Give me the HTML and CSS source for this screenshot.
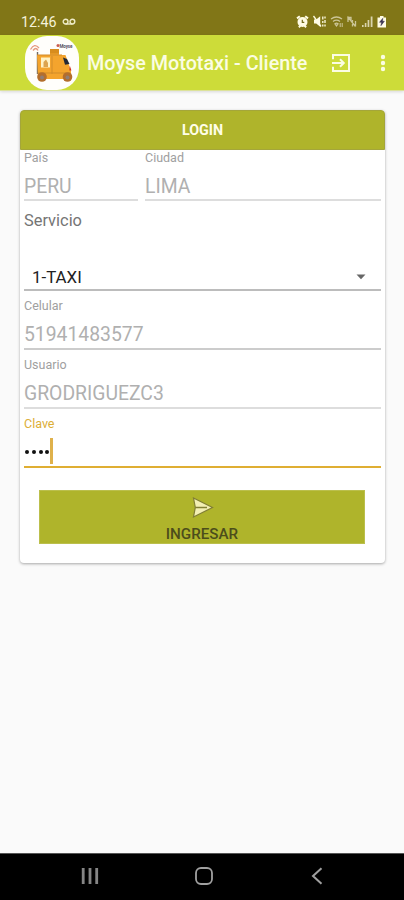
FILE: index.html
```html
<!DOCTYPE html>
<html lang="es">
<head>
<meta charset="utf-8">
<meta name="viewport" content="width=device-width, initial-scale=1">
<title>Moyse Mototaxi - Cliente</title>
<link rel="stylesheet" href="styles.css">
</head>
<body>
<div class="status">
  <span class="clock">12:46</span>
  <svg class="voicemail" width="14" height="8" viewBox="0 0 14 8" fill="none" stroke="#eeebc8" stroke-width="1.4"><circle cx="3.6" cy="3.6" r="2.4"/><circle cx="10.4" cy="3.6" r="2.4"/><path d="M3.6 6h6.8"/></svg>
  <svg class="indicators" width="92" height="16" viewBox="0 0 92 16">
    <g fill="none" stroke="#fffce4">
      <circle cx="6.5" cy="8" r="4.2" fill="#fffce4" stroke-width="1.6"/>
      <path d="M1 4.4 3.8 2.2M12 4.4 9.2 2.2M2.8 13.2l1.700-1.400M10.200 13.200l-1.700-1.400" stroke-width="2"/>
      <path d="M6.300 5.800v2.600h2" stroke="#746b1c" stroke-width="1.200"/>
      <path d="M18 5.500h2.200l4-3.200v10.400l-4-3.200H18z" fill="#fffce4" stroke="none"/>
      <path d="M17.500 2 25 12.500" stroke-width="1.300"/>
      <path d="M26.800 2.500v3m0 1.500v2m0 1.500v2M29 2.500v2m0 1.500v3m0 1.500v2" stroke-width="1.300"/>
    </g>
    <g fill="none" stroke="#cbc597" stroke-width="1.300">
      <path d="M35 5q5.500-4 11 0M37 7.500q3.500-2.600 7 0M39 9.800q1.500-1.200 3 0l-1.500 2z"/>
      <path d="M44.200 9v4m2-4v4" stroke-width="1"/>
      <path d="M52 8V3.500h3V8M51.500 2.500l8 10M56.500 6v6.500M59.500 7v5.500"/>
    </g>
    <g fill="#d9d4ac"><path d="M66 11h1.600v2H66zM68.800 9h1.600v4h-1.600zM71.600 6h1.700v7h-1.700zM74.700 2.500h1.800V13h-1.800z"/></g>
    <path d="M81.500 3.500H84V2h3.500v1.500H90V13.500h-8.500z" fill="#fffce4"/>
    <path d="m86.800 4.300-3.300 4h2l-.6 3.400 3.500-4.500h-2z" fill="#393150" stroke="#393150" stroke-width=".5"/>
  </svg>
</div>
<header class="appbar">
  <svg class="logo" width="54" height="54" viewBox="0 0 54 54">
    <rect width="54" height="54" rx="22" fill="#fffefb"/>
    <path d="M12.500 16v22" stroke="#716a67" stroke-width="1.400"/>
    <path d="M5.500 13.500q4-7 8.500-1.500M8 14.500q3-4 5 0" fill="none" stroke="#e59a80" stroke-width="1.300"/>
    <path d="M12 19h13v-6h9v6h6.500l5.500 16v8H13z" fill="#f4a42d"/>
    <path d="M25 13h9v4.500h-9z" fill="#d88d1e"/>
    <path d="M12 19h25M27 20v18M13 37h32" fill="none" stroke="#d18c2b"/>
    <path d="M16 21.500h9v10h-9z" fill="#fff2c5"/>
    <path d="M18.500 31v-5l2.500-2.500 2 3.500v4z" fill="#dca34d"/>
    <path d="m38 21.500 4 1.500 2.500 5-4.500.8z" fill="#232936"/>
    <path d="m44.800 29.500 1.600 5h-2z" fill="#c92f25"/>
    <circle cx="17" cy="41" r="4.800" fill="#b36e2d"/><circle cx="17" cy="41.500" r="2" fill="#8f7e75"/>
    <circle cx="42.500" cy="41" r="4.800" fill="#b36e2d"/><circle cx="42.500" cy="41.500" r="2" fill="#8f7e75"/>
    <circle cx="33" cy="9.500" r="1.500" fill="#c95c53"/>
    <text x="34.500" y="11.500" class="logo-text" textLength="13">Moyse</text>
  </svg>
  <h1 class="title">Moyse Mototaxi - Cliente</h1>
  <svg class="exit" width="20" height="20" viewBox="0 0 20 20" fill="none" stroke="#fbfde3" stroke-width="2"><path d="M2 6.200V2h16v16H2v-4.200M1 10h11.500M9 6.200l3.800 3.800L9 13.800"/></svg>
  <svg class="more" width="6" height="18" viewBox="0 0 6 18" fill="#fbfde3"><circle cx="3" cy="3" r="2.200"/><circle cx="3" cy="9" r="2.200"/><circle cx="3" cy="15" r="2.200"/></svg>
</header>
<main class="content">
  <section class="card">
    <h2 class="card-title">LOGIN</h2>
    <div class="fields">
      <div class="row">
        <div class="field compact country"><div class="label">País</div><div class="value">PERU</div></div>
        <div class="field compact city"><div class="label">Ciudad</div><div class="value">LIMA</div></div>
      </div>
      <div class="service">
        <div class="service-label">Servicio</div>
        <div class="select"><span class="option">1-TAXI</span><svg width="10" height="6" viewBox="0 0 10 6"><path d="M.5.5h9L5 5.200z" fill="#666"/></svg></div>
      </div>
      <div class="field strong"><div class="label">Celular</div><div class="value">51941483577</div></div>
      <div class="field"><div class="label">Usuario</div><div class="value">GRODRIGUEZC3</div></div>
      <div class="field active"><div class="label">Clave</div><div class="value password"><i class="dot"></i><i class="dot"></i><i class="dot"></i><i class="dot"></i><i class="caret"></i></div></div>
    </div>
    <div class="submit">
      <svg width="24" height="22" viewBox="0 0 24 22"><path d="M3.500 1 22.500 10.500l-19 9.500 1.800-9.500z" fill="#f3efb4" stroke="#817f35" stroke-width="1.200"/><path d="M5.300 10.500H17" stroke="#817f35" stroke-width="1.500"/></svg>
      <span class="submit-text">INGRESAR</span>
    </div>
  </section>
</main>
<nav class="navbar">
  <svg width="18" height="18" viewBox="0 0 18 18" stroke="#858585" stroke-width="2.800"><path d="M2.200 1v16M9 1v16M15.700 1v16"/></svg>
  <svg width="18" height="18" viewBox="0 0 18 18" fill="none" stroke="#a0a0a0" stroke-width="1.800"><rect x="1" y="1" width="16" height="16" rx="5"/></svg>
  <svg width="18" height="18" viewBox="0 0 18 18" fill="none" stroke="#a0a0a0" stroke-width="2"><path d="M13.500 1.200 5 9l8.500 7.800"/></svg>
</nav>
</body>
</html>
```
FILE: styles.css
```css
* { box-sizing: border-box; }
body {
  margin: 0;
  height: 900px;
  display: flex;
  flex-direction: column;
  overflow: hidden;
  background: #fafafa;
  font-family: Roboto, sans-serif;
}
svg { display: block; flex: none; }
h1, h2 { margin: 0; white-space: nowrap; }
.status {
  height: 35px;
  padding: 8px 16px 0 21px;
  display: flex;
  align-items: center;
  background: #817617;
  color: #f5f2d9;
}
.clock { font-size: 14.3px; line-height: 20px; }
.voicemail { margin-left: 5px; }
.indicators { margin-left: auto; }
.appbar {
  height: 56px;
  padding: 0 18px 0 25px;
  display: flex;
  align-items: center;
  background: #cddc39;
  border-bottom: 1px solid #dce29a;
  box-shadow: 0 1px 3px #0002;
}
.logo-text { font-size: 4.5px; font-weight: 700; fill: #555064; }
.title {
  margin-left: 8px;
  padding-top: 3px;
  color: #fbfde3;
  font-size: 19.8px;
  font-weight: 500;
  line-height: 28px;
}
.exit { margin-left: auto; }
.more { margin-left: 29px; }
.content { flex: 1; padding: 19px 19px 0 20px; }
.card {
  height: 453px;
  background: #fff;
  border-radius: 4px;
  box-shadow: 0 1px 3px #0005;
}
.card-title {
  height: 40px;
  border-radius: 4px 4px 0 0;
  border: 1px solid #a4a63a;
  background: #afb42b;
  color: #fffee8;
  text-align: center;
  font-size: 14.3px;
  font-weight: 700;
  line-height: 39px;
}
.fields { padding: 0 4px; }
.row { display: flex; gap: 7px; }
.country { width: 114px; }
.city { flex: 1; }
.field {
  height: 59px;
  padding-top: 7px;
  border-bottom: 2px solid #ddd;
}
.field.compact { height: 51px; padding-top: 0; }
.field.strong { border-color: #ccc; }
.label { color: #a0a0a0; font-size: 12.5px; line-height: 16px; }
.value {
  margin-top: 8px;
  color: #b0b0b0;
  font-size: 19.35px;
  line-height: 25px;
  white-space: nowrap;
}
.field.active { border-color: #dfae32; }
.active .label { color: #dcae36; }
.password {
  height: 26px;
  margin-top: 6px;
  display: flex;
  align-items: center;
  gap: 2.8px;
  padding-left: 1px;
}
.dot { width: 4px; height: 4px; margin-top: 2px; border-radius: 50%; background: #111; }
.caret { width: 3px; height: 26px; margin-left: -2px; background: #dfb14b; }
.service {
  height: 90px;
  display: flex;
  flex-direction: column;
  justify-content: space-between;
  border-bottom: 2px solid #bcbcbc;
  padding-top: 10px;
}
.service-label { color: #757575; font-size: 16.4px; line-height: 20px; }
.select {
  height: 28px;
  padding: 3px 15px 0 8px;
  display: flex;
  align-items: center;
  justify-content: space-between;
  color: #222;
  font-size: 16.9px;
}
.submit {
  height: 54px;
  margin: 22px 20px 0 19px;
  padding-top: 6px;
  display: flex;
  flex-direction: column;
  align-items: center;
  background: #afb42b;
  border: 1px solid #bbbf4c;
}
.submit-text { margin-top: 5px; color: #4c4d1b; font-size: 15.2px; font-weight: 500; line-height: 20px; }
.navbar {
  height: 47px;
  padding: 0 78px 2px 81px;
  display: flex;
  align-items: center;
  justify-content: space-between;
  background: #000;
  border-top: 1px solid #555;
}
```
